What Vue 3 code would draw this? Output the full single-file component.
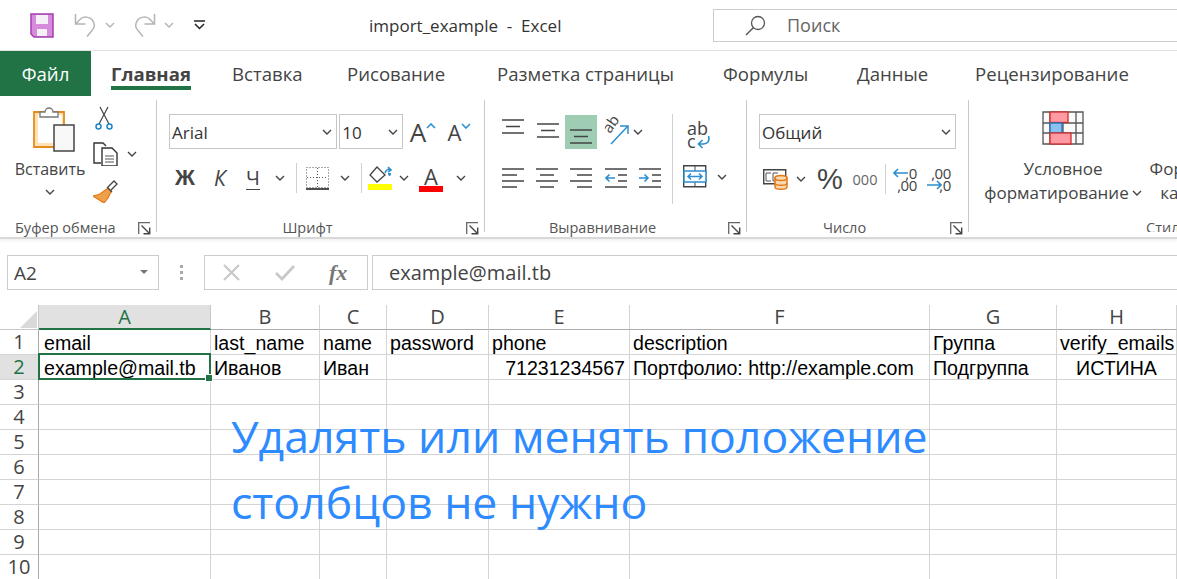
<script setup>
const tabs = ['Главная', 'Вставка', 'Рисование', 'Разметка страницы', 'Формулы', 'Данные', 'Рецензирование']
const columns = [
  { name: 'A', active: true }, { name: 'B' }, { name: 'C' }, { name: 'D' },
  { name: 'E' }, { name: 'F' }, { name: 'G' }, { name: 'H' },
]
const row1 = ['email', 'last_name', 'name', 'password', 'phone', 'description', 'Группа', 'verify_emails']
const row2 = ['example@mail.tb', 'Иванов', 'Иван', '', '71231234567', 'Портфолио: http://example.com', 'Подгруппа', 'ИСТИНА']
const blankRows = [3, 4, 5, 6, 7, 8, 9, 10]
</script>

<template>
  <div class="app">
    <svg class="defs" width="0" height="0">
      <symbol id="chev" viewBox="0 0 10 6"><path d="M1 1l4 4 4-4" fill="none" stroke="#444" stroke-width="1.4"/></symbol>
      <symbol id="launcher" viewBox="0 0 13 13"><path d="M.7 12V.7H12" fill="none" stroke="#666" stroke-width="1.300"/><path d="M3.500 3.500l7.500 7.500M11.700 5.500v6.200H5.500" fill="none" stroke="#444" stroke-width="1.400"/></symbol>
      <symbol id="al4l" viewBox="0 0 22 20"><path d="M0 1h22M0 7h15M0 13h22M0 19h15" stroke="#444" stroke-width="1.4"/></symbol>
      <symbol id="al4c" viewBox="0 0 22 20"><path d="M0 1h22M4 7h14M0 13h22M4 19h14" stroke="#444" stroke-width="1.4"/></symbol>
      <symbol id="al4r" viewBox="0 0 22 20"><path d="M0 1h22M7 7h15M0 13h22M7 19h15" stroke="#444" stroke-width="1.4"/></symbol>
    </svg>

    <header class="titlebar">
      <svg class="save" width="24" height="25" viewBox="0 0 24 25">
        <path d="M1 1h22v23H4l-3-3z" fill="#d68bdc" stroke="#a43fae" stroke-width="1.500"/>
        <rect x="6" y="2" width="12" height="9" fill="#f5f0f6"/>
        <rect x="7" y="16" width="10" height="7" fill="#f5f0f6"/>
      </svg>
      <svg class="undo" width="23" height="25" viewBox="0 0 23 25">
        <path d="M1.500 1v10h10M2 10.500l5-5c3-2 8-2 11 1 3 4 3 8 0 11l-5 6" fill="none" stroke="#b4b4b4" stroke-width="1.500"/>
      </svg>
      <svg class="chev-s c1" viewBox="0 0 10 6"><use href="#chev" opacity=".4"/></svg>
      <svg class="undo u2" width="23" height="25" viewBox="0 0 23 25">
        <path d="M21.500 1v10h-10M21 10.500l-5-5c-3-2-8-2-11 1-3 4-3 8 0 11l5 6" fill="none" stroke="#b4b4b4" stroke-width="1.500"/>
      </svg>
      <svg class="chev-s c2" viewBox="0 0 10 6"><use href="#chev" opacity=".4"/></svg>
      <svg class="qat" width="11" height="10" viewBox="0 0 11 10">
        <path d="M0 1h11" stroke="#222" stroke-width="1.500"/>
        <path d="M1 4l4.500 4.500L10 4" fill="none" stroke="#222" stroke-width="1.500"/>
      </svg>
      <div class="doc">import_example&nbsp; - &nbsp;Excel</div>
      <div class="search">
        <svg width="21" height="21" viewBox="0 0 21 21">
          <circle cx="13" cy="8" r="6.500" fill="none" stroke="#555" stroke-width="1.300"/>
          <path d="M8.500 12.500L1 20" stroke="#555" stroke-width="1.500"/>
        </svg>
        <span>Поиск</span>
      </div>
    </header>

    <nav class="tabs">
      <div class="file-cell"><div class="file">Файл</div></div>
      <div v-for="(t, i) in tabs" :key="t" class="tab" :class="{ on: i === 0 }"><span>{{ t }}</span></div>
    </nav>

    <section class="ribbon">
      <div class="group g1">
        <div class="g-body clip">
          <div class="paste">
            <svg class="paste-ic" width="42" height="46" viewBox="0 0 42 46">
              <path d="M1 6h30v35H1z" fill="#fde3b4" stroke="#e68a1e" stroke-width="1.800"/>
              <path d="M5 9h24v28H5z" fill="#fff"/>
              <path d="M7 11V6h5a4 4 0 0 1 8 0h5v5z" fill="#fff" stroke="#777" stroke-width="1.300"/>
              <path d="M21 19h20v26H21z" fill="#f8f8f8" stroke="#444" stroke-width="1.500"/>
            </svg>
            <span class="pastelabel">Вставить</span>
            <svg class="chev-s" viewBox="0 0 10 6"><use href="#chev"/></svg>
          </div>
          <div class="clip-side">
            <svg width="18" height="24" viewBox="0 0 18 24">
              <path d="M4 18L13 1M14 18L5 1" stroke="#444" stroke-width="1.200" fill="none"/>
              <circle cx="3.500" cy="20.500" r="2.500" fill="#fff" stroke="#1e86c8" stroke-width="1.500"/>
              <circle cx="14.500" cy="20.500" r="2.500" fill="#fff" stroke="#1e86c8" stroke-width="1.500"/>
            </svg>
            <div class="copyrow">
              <svg width="25" height="24" viewBox="0 0 25 24">
                <path d="M8 21H1V1h9l3 3" fill="none" stroke="#333" stroke-width="1.400"/>
                <path d="M9 6h10l5 5v13H9z" fill="#fff" stroke="#333" stroke-width="1.400"/>
                <path d="M12 14h9M12 17h9M12 20h9" stroke="#555"/>
              </svg>
              <svg class="chev-s" viewBox="0 0 10 6"><use href="#chev"/></svg>
            </div>
            <svg class="brush" width="25" height="23" viewBox="0 0 25 23">
              <path d="M15 8l3 4-3 6-4 5-11-7 7-2z" fill="#f0a04a" stroke="#e2791a" stroke-width="1.200"/>
              <path d="M15 7l6-6 3 3-6 6" fill="#fff" stroke="#444" stroke-width="1.300"/>
              <path d="M14 7l5 5" stroke="#444" stroke-width="1.400"/>
            </svg>
          </div>
        </div>
        <div class="g-label">
          <span>Буфер обмена</span>
          <svg class="launch" width="13" height="13"><use href="#launcher"/></svg>
        </div>
      </div>

      <div class="group g2">
        <div class="g-body font">
          <div class="font-r1">
            <div class="select w-font"><span>Arial</span><svg class="chev-d" viewBox="0 0 10 6"><use href="#chev"/></svg></div>
            <div class="select w-size"><span>10</span><svg class="chev-d" viewBox="0 0 10 6"><use href="#chev"/></svg></div>
            <div class="grow">A<svg width="10" height="6" viewBox="0 0 10 6"><path d="M1 5l4-4 4 4" fill="none" stroke="#2b8fd0" stroke-width="1.600"/></svg></div>
            <div class="grow small">A<svg width="10" height="6" viewBox="0 0 10 6"><path d="M1 1l4 4 4-4" fill="none" stroke="#2b8fd0" stroke-width="1.600"/></svg></div>
          </div>
          <div class="font-r2">
            <span class="b">Ж</span>
            <span class="i">К</span>
            <span class="u">Ч</span>
            <svg class="chev-s" viewBox="0 0 10 6"><use href="#chev"/></svg>
            <i class="vsep"></i>
            <svg width="23" height="23" viewBox="0 0 23 23">
              <path d="M.5.500h22v20H.5zM11.500 1v19M1 10.500h21" fill="none" stroke="#555" stroke-dasharray="1 2"/>
              <path d="M0 22h23" stroke="#222" stroke-width="1.600"/>
            </svg>
            <svg class="chev-s" viewBox="0 0 10 6"><use href="#chev"/></svg>
            <i class="vsep"></i>
            <div class="fill">
              <svg width="24" height="17" viewBox="0 0 24 17">
                <path d="M9 1l-7 8 7 7 8-7z" fill="#fff" stroke="#444" stroke-width="1.300"/>
                <path d="M17 7c1-3 2-4 5-4M20 1l3 3-3 2" fill="none" stroke="#2b8fd0" stroke-width="1.600"/>
                <path d="M20 7a1.500 3 0 1 0 3 0" fill="#2b8fd0"/>
              </svg>
              <i class="swatch yellow"></i>
            </div>
            <svg class="chev-s" viewBox="0 0 10 6"><use href="#chev"/></svg>
            <div class="fontcolor">
              <span>А</span>
              <i class="swatch red"></i>
            </div>
            <svg class="chev-s" viewBox="0 0 10 6"><use href="#chev"/></svg>
          </div>
        </div>
        <div class="g-label">
          <span>Шрифт</span>
          <svg class="launch" width="13" height="13"><use href="#launcher"/></svg>
        </div>
      </div>

      <div class="group g3">
        <div class="g-body align">
          <div class="align-left">
            <div class="al-r1">
              <svg width="22" height="34" viewBox="0 0 22 34"><path d="M0 5h22M4 11.500h14M0 18h22" stroke="#444" stroke-width="1.400"/></svg>
              <svg width="22" height="34" viewBox="0 0 22 34"><path d="M0 9h22M4 15.500h14M0 22h22" stroke="#444" stroke-width="1.400"/></svg>
              <div class="al-on"><svg width="22" height="34" viewBox="0 0 22 34"><path d="M0 15h22M4 21.500h14M0 28h22" stroke="#444" stroke-width="1.400"/></svg></div>
              <svg class="orient" width="30" height="26" viewBox="0 0 30 26">
                <text transform="translate(11 15) rotate(-55)" font-family="Open Sans" font-size="15" fill="#444">ab</text>
                <path d="M12 25L28 8M21 7h8v8" fill="none" stroke="#2b8fd0" stroke-width="1.500"/>
              </svg>
              <svg class="chev-s" viewBox="0 0 10 6"><use href="#chev"/></svg>
            </div>
            <div class="al-r2">
              <svg width="22" height="20"><use href="#al4l"/></svg>
              <svg width="22" height="20"><use href="#al4c"/></svg>
              <svg width="22" height="20"><use href="#al4r"/></svg>
              <svg width="22" height="20" viewBox="0 0 22 20">
                <path d="M0 1h22M13 7h9M13 13h9M0 19h22" stroke="#444" stroke-width="1.400"/>
                <path d="M10 10H1M4.500 6.500L1 10l3.500 3.500" fill="none" stroke="#2b8fd0" stroke-width="1.600"/>
              </svg>
              <svg width="22" height="20" viewBox="0 0 22 20">
                <path d="M0 1h22M13 7h9M13 13h9M0 19h22" stroke="#444" stroke-width="1.400"/>
                <path d="M0 10h9M5.500 6.500L9 10l-3.500 3.500" fill="none" stroke="#2b8fd0" stroke-width="1.600"/>
              </svg>
            </div>
          </div>
          <i class="vsep tall"></i>
          <div class="align-right">
            <div class="wrap">
              <span class="wrap-t">ab<br>c</span>
              <svg width="13" height="14" viewBox="0 0 13 14"><path d="M11.500 1c1.500 5-1 8-5 8H1.500M5.500 5L1.500 9l4 4" fill="none" stroke="#2b8fd0" stroke-width="1.600"/></svg>
            </div>
            <div class="merge">
              <svg width="24" height="23" viewBox="0 0 24 23">
                <path d="M.700.700h22v21H.7z" fill="#fff" stroke="#444" stroke-width="1.400"/>
                <path d="M12 1v5M12 17v5" stroke="#444"/>
                <path d="M1 6h22v11H1z" fill="#fff" stroke="#2b8fd0" stroke-width="1.500"/>
                <path d="M5 11.500h14M8 8.500l-3 3 3 3M16 8.500l3 3-3 3" fill="none" stroke="#2b8fd0" stroke-width="1.500"/>
              </svg>
              <svg class="chev-s" viewBox="0 0 10 6"><use href="#chev"/></svg>
            </div>
          </div>
        </div>
        <div class="g-label">
          <span>Выравнивание</span>
          <svg class="launch" width="13" height="13"><use href="#launcher"/></svg>
        </div>
      </div>

      <div class="group g4">
        <div class="g-body num">
          <div class="select w-num"><span>Общий</span><svg class="chev-d" viewBox="0 0 10 6"><use href="#chev"/></svg></div>
          <div class="num-r2">
            <svg width="25" height="21" viewBox="0 0 25 21">
              <path d="M.700.700h22v14H.7z" fill="#fff" stroke="#444" stroke-width="1.400"/>
              <path d="M8 4H3v8h5M15 4h-5v8h5" fill="none" stroke="#555"/>
              <path d="M12 9v9c0 3 12 3 12 0V9z" fill="#fbd9b0" stroke="#e2791a" stroke-width="1.500"/>
              <ellipse cx="18" cy="9" rx="6" ry="2.500" fill="#fbd9b0" stroke="#e2791a" stroke-width="1.500"/>
              <path d="M12 14c0 3 12 3 12 0" fill="none" stroke="#e2791a" stroke-width="1.500"/>
            </svg>
            <svg class="chev-s" viewBox="0 0 10 6"><use href="#chev"/></svg>
            <span class="pct">%</span>
            <span class="zeros">000</span>
            <i class="vsep"></i>
            <div class="dec">
              <svg width="15" height="10" viewBox="0 0 15 10"><path d="M15 5H1M5 1L1 5l4 4" fill="none" stroke="#2b8fd0" stroke-width="1.600"/></svg><b>,0</b>
              <b class="dec-b">,00</b>
            </div>
            <div class="dec">
              <b class="dec-b">,00</b>
              <svg width="15" height="10" viewBox="0 0 15 10"><path d="M0 5h14M10 1l4 4-4 4" fill="none" stroke="#2b8fd0" stroke-width="1.600"/></svg><b>,0</b>
            </div>
          </div>
        </div>
        <div class="g-label">
          <span>Число</span>
          <svg class="launch" width="13" height="13"><use href="#launcher"/></svg>
        </div>
      </div>

      <div class="group g5">
        <div class="g-body styles">
          <div class="cond">
            <svg class="cond-ic" width="42" height="34" viewBox="0 0 42 34">
              <path d="M1 1h40v32H1zM1 12h40M1 22h40M8 1v32M21 1v32M34 1v32" fill="#fafafa" stroke="#555" stroke-width="1.300"/>
              <rect x="8" y="1" width="18" height="10.500" fill="#ff9aa2" stroke="#d22c2c" stroke-width="1.300"/>
              <rect x="8" y="12" width="12" height="10" fill="#8cc0ee" stroke="#1b6fb8" stroke-width="1.300"/>
              <rect x="8" y="22" width="21" height="11" fill="#ff9aa2" stroke="#d22c2c" stroke-width="1.300"/>
            </svg>
            <span class="cond-t">Условное</span>
            <span class="cond-t">форматирование <svg class="chev-s" viewBox="0 0 10 6"><use href="#chev"/></svg></span>
          </div>
          <div class="cond second">
            <span class="cond-t">Форматировать</span>
            <span class="cond-t">как таблицу <svg class="chev-s" viewBox="0 0 10 6"><use href="#chev"/></svg></span>
          </div>
        </div>
        <div class="g-label style-label"><span>Стили</span></div>
      </div>
    </section>

    <section class="formula">
      <div class="namebox">
        <span>A2</span>
        <svg width="9" height="5" viewBox="0 0 9 5"><path d="M0 0h8L4 4z" fill="#777"/></svg>
      </div>
      <div class="dots"><i></i><i></i><i></i></div>
      <div class="fbtns">
        <svg width="18" height="17" viewBox="0 0 18 17"><path d="M1 1l15 15M16 1L1 16" stroke="#c8c8c8" stroke-width="2.200"/></svg>
        <svg width="20" height="17" viewBox="0 0 20 17"><path d="M1 9l6 6L19 2" fill="none" stroke="#c8c8c8" stroke-width="2.800"/></svg>
        <span class="fx">fx</span>
      </div>
      <div class="finput">example@mail.tb</div>
    </section>

    <section class="sheet">
      <div class="corner"><svg width="17" height="17" viewBox="0 0 17 17"><path d="M17 0v17H0z" fill="#d9d9d9"/></svg></div>
      <div v-for="c in columns" :key="c.name" class="colh" :class="{ on: c.active }">{{ c.name }}</div>

      <div class="rowh">1</div>
      <div v-for="(v, i) in row1" :key="i" class="cell" :class="{ first: i === 0 }">{{ v }}</div>

      <div class="rowh on">2</div>
      <div v-for="(v, i) in row2" :key="i" class="cell" :class="{ first: i === 0, selected: i === 0, right: i === 4, center: i === 7 }">
        {{ v }}<i v-if="i === 0" class="handle"></i>
      </div>

      <template v-for="r in blankRows" :key="r">
        <div class="rowh">{{ r }}</div>
        <div v-for="c in columns" :key="c.name" class="cell"></div>
      </template>

      <div class="note">Удалять или менять положение<br>столбцов не нужно</div>
    </section>
  </div>
</template>

<style>
html, body { margin: 0; background: #fff; overflow: hidden; }
</style>

<style scoped>
.app { width: 1177px; height: 579px; overflow: hidden; font-family: "Open Sans", "Noto Sans", sans-serif; color: #444; background: #fff; position: relative; }
.defs { position: absolute; }
svg { display: block; flex: none; }
.chev-s { width: 10px; height: 6px; }
.chev-d { width: 10px; height: 6px; }

.titlebar { height: 51px; display: flex; align-items: center; box-sizing: border-box; padding-left: 30px; border-bottom: 1px solid #e2e2e2; }
.undo { margin-left: 20px; }
.u2 { margin-left: 18px; }
.c1, .c2 { margin-left: 8px; }
.qat { margin-left: 20px; }
.doc { margin-left: 164px; width: 344px; font-size: 17px; color: #333; }
.search { width: 464px; height: 33px; box-sizing: border-box; border: 1px solid #ccc; border-right: 0; display: flex; align-items: center; padding-left: 31px; font-size: 18px; color: #666; }
.search span { margin-left: 21px; }

.tabs { height: 45px; display: grid; grid-template-columns: 111px 121px 115px 150px 226px 134px 118px 1fr; font-size: 18.6px; }
.file-cell { width: 91px; background: #217346; color: #fff; display: flex; align-items: center; justify-content: center; }
.tab { display: flex; align-items: center; color: #444; white-space: nowrap; }
.tab.on span { font-weight: 700; border-bottom: 4px solid #217346; line-height: 24px; margin-top: 4px; color: #444; }

.ribbon { height: 143px; box-sizing: border-box; display: flex; padding-top: 4px; border-bottom: 2px solid #d8d8d8; box-shadow: 0 2px 3px rgba(0,0,0,.06); }
.group { box-sizing: border-box; height: 132px; border-right: 1px solid #c8c8c8; display: flex; flex-direction: column; flex: none; }
.g1 { width: 157px; }
.g2 { width: 328px; }
.g3 { width: 262px; }
.g4 { width: 222px; }
.g5 { flex: 1; min-width: 0; border-right: 0; overflow: hidden; }
.g-body { height: 119px; box-sizing: border-box; }
.g-label { height: 13px; font-size: 14.5px; line-height: 17px; color: #555; position: relative; text-align: center; padding-right: 26px; white-space: nowrap; }
.launch { position: absolute; right: 5px; top: 3px; }

.clip { display: flex; padding-left: 15px; }
.paste { width: 70px; display: flex; flex-direction: column; align-items: center; padding-top: 6px; }
.paste-ic { margin-left: 7px; }
.pastelabel { font-size: 16px; margin-top: 5px; line-height: 24px; white-space: nowrap; }
.paste .chev-s { margin-top: 8px; }
.clip-side { margin-left: 8px; padding-top: 6px; display: flex; flex-direction: column; }
.clip-side > svg:first-child { margin-left: 2px; }
.copyrow { display: flex; align-items: center; gap: 9px; margin-top: 12px; }
.brush { margin-top: 14px; }
.g1 .g-label { text-align: left; padding-left: 15px; padding-right: 0; }

.font { padding: 14px 0 0 12px; }
.font-r1 { display: flex; align-items: center; gap: 2px; }
.select { height: 35px; box-sizing: border-box; border: 1px solid #c6c6c6; display: flex; align-items: center; justify-content: space-between; padding: 1px 4px 0 2px; font-size: 17px; color: #333; }
.w-font { width: 170px; }
.w-size { width: 64px; }
.grow { width: 37px; margin-left: 5px; font-size: 26px; display: flex; align-items: flex-start; line-height: 30px; color: #444; }
.grow svg { margin-top: 6px; }
.grow.small { font-size: 22px; margin-left: -1px; }
.font-r2 { display: grid; grid-template-columns: 38px 32px 34px 20px 12px 30px 26px 6px 32px 16px 38px 22px; justify-items: center; align-items: center; height: 34px; margin-top: 12px; margin-left: -3px; }
.b { font: 700 22px "Liberation Sans", sans-serif; }
.i { font: italic 21px "Open Sans", sans-serif; }
.u { font-size: 20px; line-height: 22px; border-bottom: 1.500px solid #444; }
.vsep { display: block; width: 1px; height: 30px; background: #d0d0d0; }
.vsep.tall { height: 90px; }
.fill { display: flex; flex-direction: column; align-items: center; }
.swatch { display: block; width: 24px; height: 6px; margin-top: 1px; }
.yellow { background: #ffff00; }
.red { background: #ff0000; margin-top: -2px; }
.fontcolor { display: flex; flex-direction: column; align-items: center; font-size: 22px; line-height: 24px; }

.align { display: flex; padding: 14px 0 0 11px; }
.align-left { width: 176px; }
.al-r1 { display: grid; grid-template-columns: 34px 35px 32px 33px 16px; height: 35px; justify-items: center; align-items: center; }
.al-on { width: 32px; height: 34px; background: #9fcdb3; display: flex; align-items: center; justify-content: center; }
.orient { overflow: visible; margin-left: -2px; margin-right: -2px; }
.al-r2 { display: grid; grid-template-columns: 34px 34px 34px 35px 34px; justify-items: center; align-items: center; margin-top: 19px; }
.align-right { margin-left: 10px; }
.wrap { display: flex; align-items: flex-end; height: 32px; margin-top: 3px; margin-left: 4px; }
.wrap-t { font-size: 18px; line-height: 13px; color: #444; width: 10px; padding-bottom: 1px; }
.merge { display: flex; align-items: center; gap: 10px; margin-top: 16px; }

.num { padding: 14px 0 0 12px; }
.w-num { width: 197px; }
.num-r2 { display: grid; grid-template-columns: 28px 24px 34px 36px 4px 36px 32px; justify-items: center; align-items: center; height: 36px; margin-top: 12px; margin-left: 2px; }
.pct { font: 29px/36px "Liberation Sans", sans-serif; }
.zeros { font-size: 14.5px; color: #666; }
.dec { display: grid; grid-template-columns: auto auto; font-size: 15px; line-height: 12px; color: #444; align-items: center; justify-content: end; column-gap: 0; }
.dec svg { margin-right: -3px; }
.dec b { font-weight: 400; letter-spacing: -.5px; }
.dec-b { grid-column: 1 / span 2; text-align: right; }

.styles { display: flex; }
.cond { flex: none; display: flex; flex-direction: column; align-items: center; width: 160px; margin-left: 14px; padding-top: 11px; }
.cond-t { font-size: 17px; line-height: 24px; color: #444; white-space: nowrap; display: flex; align-items: center; gap: 3px; }
.cond-ic { margin-bottom: 12px; }
.second { margin-left: -7px; padding-top: 57px; }
.style-label { text-align: left; padding-left: 177px; }

.formula { display: flex; align-items: center; height: 35px; margin-top: 16px; padding-left: 7px; }
.namebox { width: 152px; height: 35px; box-sizing: border-box; border: 1px solid #ccc; display: flex; align-items: center; justify-content: space-between; padding: 0 9px 0 6px; font-size: 19px; color: #444; }
.dots { width: 45px; display: flex; flex-direction: column; gap: 3px; align-items: center; }
.dots i { display: block; width: 3px; height: 3px; background: #aaa; }
.fbtns { width: 164px; height: 35px; box-sizing: border-box; border: 1px solid #ccc; display: flex; align-items: center; gap: 34px; padding-left: 18px; }
.fx { font: italic 700 22px "Liberation Serif", serif; color: #777; }
.finput { margin-left: 4px; flex: 1; height: 35px; box-sizing: border-box; border: 1px solid #ccc; border-right: 0; display: flex; align-items: center; padding-left: 16px; font-size: 20px; color: #444; }

.sheet { position: relative; margin-top: 15px; display: grid; grid-template-columns: 39px 172px 109px 67px 102px 141px 300px 127px 120px; grid-auto-rows: 25px; font-family: "Liberation Sans", Arial, sans-serif; }
.corner { border-bottom: 1px solid #c8c8c8; border-right: 1px solid #c8c8c8; display: flex; align-items: flex-end; justify-content: flex-end; padding: 0 1px 1px 0; box-sizing: border-box; }
.colh { box-sizing: border-box; border-right: 1px solid #d4d4d4; border-bottom: 1px solid #ababab; text-align: center; font-size: 20px; line-height: 24px; color: #444; font-family: "Open Sans", sans-serif; }
.colh.on { background: #e1e1e1; color: #217346; border-bottom: 2px solid #217346; border-right-color: #c8c8c8; }
.rowh { box-sizing: border-box; border-right: 1px solid #a8a8a8; border-bottom: 1px solid #d4d4d4; text-align: center; font-size: 20px; line-height: 24px; color: #444; font-family: "Open Sans", sans-serif; }
.rowh.on { background: #e1e1e1; color: #217346; }
.cell { box-sizing: border-box; position: relative; border-right: 1px solid #d4d4d4; border-bottom: 1px solid #d4d4d4; padding: 0 3px; font-size: 19.6px; line-height: 26px; color: #000; white-space: nowrap; min-width: 0; }
.cell.first { padding-left: 5px; }
.cell.right { text-align: right; padding-right: 4px; }
.cell.center { text-align: center; }
.selected::after { content: ""; position: absolute; inset: -2px -1px -1px -1px; border: 2px solid #217346; }
.handle { position: absolute; right: -3px; bottom: -3px; width: 6px; height: 6px; background: #217346; border: 1px solid #fff; z-index: 2; }
.note { position: absolute; left: 231px; top: 98px; font-size: 44.6px; line-height: 66px; color: #2e8bff; white-space: nowrap; font-family: "Open Sans", sans-serif; }
</style>
